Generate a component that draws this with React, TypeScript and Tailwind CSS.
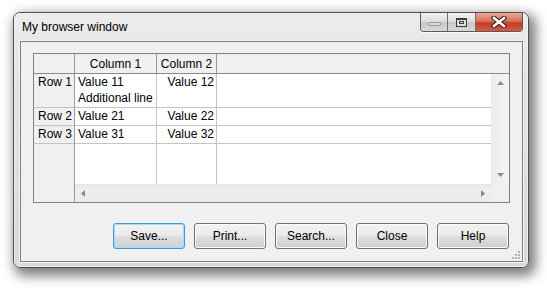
import React from "react";

const font = { fontFamily: '"Liberation Sans", Arial, sans-serif' };

function CaptionButtons() {
  return (
    <div className="flex h-[19px] rounded-b-[4px] border border-t-0 border-[#5a5a5a] overflow-hidden shadow-[0_1px_0_rgba(255,255,255,0.8)]">
      <div className="w-[27px] flex items-center justify-center bg-[linear-gradient(#f2f2f2,#dcdcdc_50%,#c8c8c8_51%,#d8d8d8)] border-r border-[#707070]">
        <div className="w-[13px] h-[4px] mt-[3px] rounded-[1px] border border-[#9a9a9a] bg-[#d8d8d8]" />
      </div>
      <div className="w-[28px] flex items-center justify-center bg-[linear-gradient(#f2f2f2,#dcdcdc_50%,#c8c8c8_51%,#d8d8d8)] border-r border-[#707070]">
        <div className="w-[11px] h-[9px] border border-[#3a3a3a] border-t-[2px] flex items-center justify-center bg-[#e0e0e0]">
          <div className="w-[5px] h-[3px] border border-[#3a3a3a]" />
        </div>
      </div>
      <div className="w-[46px] flex items-center justify-center bg-[linear-gradient(#eba999,#d9705a_45%,#c43c26_55%,#d55b42)]">
        <svg width="16" height="12" viewBox="0 0 16 12">
          <path d="M3 2 L13 10 M13 2 L3 10" stroke="#3a1a14" strokeWidth="4.6" strokeLinecap="square" />
          <path d="M3 2 L13 10 M13 2 L3 10" stroke="#ffffff" strokeWidth="2.6" strokeLinecap="square" />
        </svg>
      </div>
    </div>
  );
}

function Btn({ label, focus }: { label: string; focus?: boolean }) {
  return (
    <div
      className={
        "w-[72px] h-[26px] rounded-[3px] flex items-center justify-center text-[12px] text-black " +
        (focus
          ? "border border-[#3c9ad8] shadow-[inset_0_0_0_1px_#a8dcf6] bg-[linear-gradient(#f3f3f3,#ebebeb_45%,#dcdcdc_55%,#d0d0d0)]"
          : "border border-[#707070] shadow-[inset_0_0_0_1px_#fbfbfb] bg-[linear-gradient(#f2f2f2,#ebebeb_45%,#dddddd_55%,#cfcfcf)]")
      }
    >
      {label}
    </div>
  );
}

function Arrow({ dir }: { dir: "up" | "down" | "left" | "right" }) {
  const d =
    dir === "up"
      ? "M0 4 L3.5 0 L7 4 Z"
      : dir === "down"
      ? "M0 0 L7 0 L3.5 4 Z"
      : dir === "left"
      ? "M4 0 L4 7 L0 3.5 Z"
      : "M0 0 L0 7 L4 3.5 Z";
  const horiz = dir === "up" || dir === "down";
  return (
    <svg width={horiz ? 7 : 4} height={horiz ? 4 : 7} viewBox={horiz ? "0 0 7 4" : "0 0 4 7"}>
      <path d={d} fill="#8a8a8a" />
    </svg>
  );
}

function Table() {
  const rows = [
    { h: "Row 1", c1: ["Value 11", "Additional line"], c2: "Value 12", height: "h-[34px]" },
    { h: "Row 2", c1: ["Value 21"], c2: "Value 22", height: "h-[18px]" },
    { h: "Row 3", c1: ["Value 31"], c2: "Value 32", height: "h-[18px]" },
  ];
  return (
    <div className="h-[150px] border border-[#828282] flex flex-col bg-[#f0f0f0] text-[12px] text-black">
      <div className="flex h-[20px] border-b border-[#8a8a8a] bg-[#f0f0f0]">
        <div className="w-[41px] border-r border-[#9a9a9a]" />
        <div className="w-[82px] border-r border-[#9a9a9a] flex items-center justify-center">Column 1</div>
        <div className="w-[60px] border-r border-[#9a9a9a] flex items-center justify-center">Column 2</div>
        <div className="flex-1" />
      </div>
      <div className="flex flex-1 min-h-0">
        <div className="w-[41px] border-r border-[#9a9a9a] flex flex-col bg-[#f0f0f0]">
          {rows.map((r) => (
            <div key={r.h} className={r.height + " border-b border-[#c4c4c4] pr-[2px] text-right leading-[16px]"}>
              {r.h}
            </div>
          ))}
        </div>
        <div className="flex-1 flex flex-col min-w-0">
          <div className="flex flex-1 min-h-0">
            <div className="flex-1 bg-white flex flex-col">
              {rows.map((r) => (
                <div key={r.h} className={r.height + " flex border-b border-[#c4c4c4]"}>
                  <div className="w-[82px] border-r border-[#c4c4c4] pl-[3px] leading-[16px]">
                    {r.c1.map((t) => (
                      <div key={t}>{t}</div>
                    ))}
                  </div>
                  <div className="w-[60px] border-r border-[#c4c4c4] pr-[2px] text-right leading-[16px]">{r.c2}</div>
                  <div className="flex-1" />
                </div>
              ))}
              <div className="flex flex-1">
                <div className="w-[82px] border-r border-[#c4c4c4]" />
                <div className="w-[60px] border-r border-[#c4c4c4]" />
                <div className="flex-1" />
              </div>
            </div>
            <div className="w-[18px] bg-[linear-gradient(90deg,#ececec,#f4f4f4)] flex flex-col items-center justify-between pt-[7px] pb-[7px]">
              <Arrow dir="up" />
              <Arrow dir="down" />
            </div>
          </div>
          <div className="flex h-[18px]">
            <div className="flex-1 bg-[linear-gradient(#e6e6e6,#eeeeee_30%,#ebebeb)] flex items-center justify-between pl-[6px] pr-[6px]">
              <Arrow dir="left" />
              <Arrow dir="right" />
            </div>
            <div className="w-[18px] bg-[#f0f0f0]" />
          </div>
        </div>
      </div>
    </div>
  );
}

export default function App() {
  return (
    <div className="w-[547px] h-[288px] bg-white pl-[13px] pt-[12px]" style={font}>
      <div className="relative w-[516px] h-[256px] rounded-[7px] border border-[#4d4d4d] bg-[linear-gradient(#ececec,#e2e2e2_30%,#d9d9d9)] shadow-[4px_5px_12px_3px_rgba(0,0,0,0.5)] flex flex-col">
        <div className="absolute inset-0 rounded-[6px] border border-[#f6f6f6]/70 pointer-events-none" />
        <div className="h-[28px] flex items-start pl-[8px] pr-[5px] relative">
          <div className="pt-[6px] text-[12px] text-black leading-[16px]">My browser window</div>
          <div className="ml-auto">
            <CaptionButtons />
          </div>
        </div>
        <div className="ml-[6px] mr-[5px] mb-[5px] flex-1 border border-[#7d7d7d] bg-[#f0f0f0] pt-[11px] px-[12px] pb-[12px] flex flex-col relative shadow-[0_0_0_1px_#f4f4f4]">
          <Table />
          <div className="mt-[20px] flex justify-end gap-[9px] pr-[1px]">
            <Btn label="Save..." focus />
            <Btn label="Print..." />
            <Btn label="Search..." />
            <Btn label="Close" />
            <Btn label="Help" />
          </div>
          <svg className="absolute right-[2px] bottom-[2px]" width="8" height="8" viewBox="0 0 8 8">
            {[
              [6, 0],
              [6, 3],
              [3, 3],
              [6, 6],
              [3, 6],
              [0, 6],
            ].map(([x, y], i) => (
              <rect key={i} x={x} y={y} width="2" height="2" fill="#b4b4b4" />
            ))}
          </svg>
        </div>
      </div>
    </div>
  );
}
